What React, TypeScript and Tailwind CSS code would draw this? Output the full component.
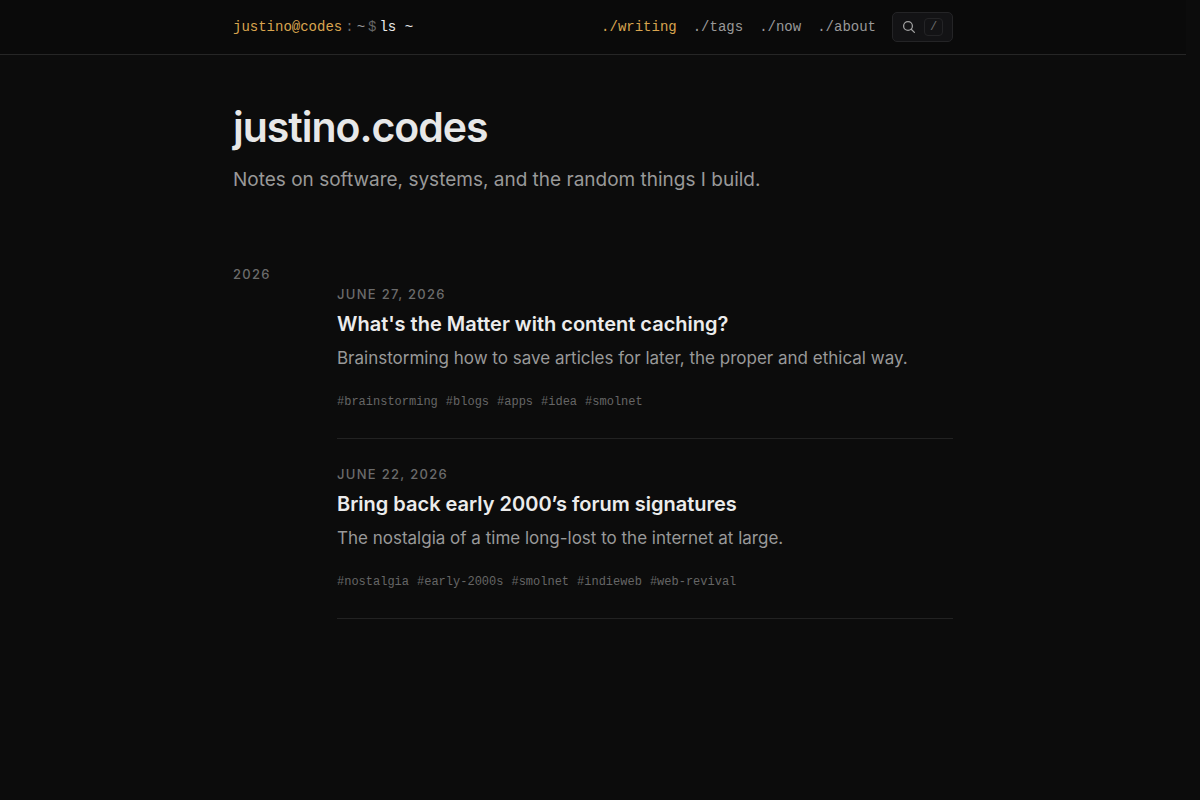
import React from 'react'

interface Post {
  date: string
  title: string
  summary: string
  tags: string[]
}

const navItems = ['writing', 'tags', 'now', 'about']

const posts: Post[] = [
  {
    date: 'June 27, 2026',
    title: "What's the Matter with content caching?",
    summary: 'Brainstorming how to save articles for later, the proper and ethical way.',
    tags: ['brainstorming', 'blogs', 'apps', 'idea', 'smolnet'],
  },
  {
    date: 'June 22, 2026',
    title: 'Bring back early 2000’s forum signatures',
    summary: 'The nostalgia of a time long-lost to the internet at large.',
    tags: ['nostalgia', 'early-2000s', 'smolnet', 'indieweb', 'web-revival'],
  },
]

const Header: React.FC = () => (
  <header className="border-b border-[#262626] bg-[#0a0a0a]">
    <div className="mx-auto flex h-[54px] max-w-[720px] items-center justify-between font-['Liberation_Mono',monospace] text-sm">
      <a href="/" className="flex items-center gap-[3px] whitespace-pre">
        <span className="text-[#d9a54f]">justino@codes</span>
        <span className="text-[#666]">:</span>
        <span className="text-[#9a9a9a]">~</span>
        <span className="text-[#666]">$</span>
        <span className="text-[#ececec]">ls ~</span>
      </a>
      <nav className="flex items-center gap-4">
        {navItems.map((item) => (
          <a
            key={item}
            href={`/${item}`}
            className={item === 'writing' ? 'text-[#d9a54f]' : 'text-[#999]'}
          >
            ./{item}
          </a>
        ))}
        <button
          type="button"
          aria-label="Search"
          className="flex h-[30px] items-center gap-2 rounded-[5px] border border-[#242426] bg-[#131315] px-[9px] text-[#a0a0a0]"
        >
          <svg width="14" height="14" viewBox="0 0 14 14" fill="none" stroke="currentColor" strokeWidth="1.3" strokeLinecap="round">
            <circle cx="6" cy="6" r="4.4" />
            <path d="M9.2 9.2 L12.4 12.4" />
          </svg>
          <kbd className="flex h-[18px] w-[19px] items-center justify-center rounded border border-[#242426] font-['Liberation_Mono',monospace] text-xs text-[#6b6b6b]">
            /
          </kbd>
        </button>
      </nav>
    </div>
  </header>
)

const PostItem: React.FC<{ post: Post }> = ({ post }) => (
  <article className="border-b border-[#222] pt-5 pb-7">
    <time className="block text-[13px] leading-4 font-medium tracking-widest text-[#6b6b6b] uppercase">
      {post.date}
    </time>
    <h2 className="mt-2 text-xl font-semibold text-[#ececec]">
      <a href="#">{post.title}</a>
    </h2>
    <p className="mt-1.5 text-[17px] leading-7 text-[#999]">{post.summary}</p>
    <ul className="mt-[22px] flex flex-wrap gap-2 font-['Liberation_Mono',monospace] text-xs text-[#666]">
      {post.tags.map((tag) => (
        <li key={tag}>
          <a href={`/tags/${tag}`}>#{tag}</a>
        </li>
      ))}
    </ul>
  </article>
)

export default function App() {
  return (
    <div className="min-h-screen bg-[#0c0c0c] pr-3.5 font-['Inter',sans-serif]">
      <Header />
      <main className="mx-auto max-w-[720px] pt-12">
        <h1 className="text-[41px] leading-[48px] font-semibold tracking-tight text-[#e8e8e8]">justino.codes</h1>
        <p className="mt-[15px] text-[19px] leading-7 text-[#999]">
          Notes on software, systems, and the random things I build.
        </p>
        <section className="mt-[72px] flex">
          <h2 className="w-[104px] shrink-0 text-[13px] leading-4 font-medium tracking-widest text-[#6b6b6b]">2026</h2>
          <div className="flex flex-1 flex-col gap-[7px]">
            {posts.map((post) => (
              <PostItem key={post.title} post={post} />
            ))}
          </div>
        </section>
      </main>
    </div>
  )
}
